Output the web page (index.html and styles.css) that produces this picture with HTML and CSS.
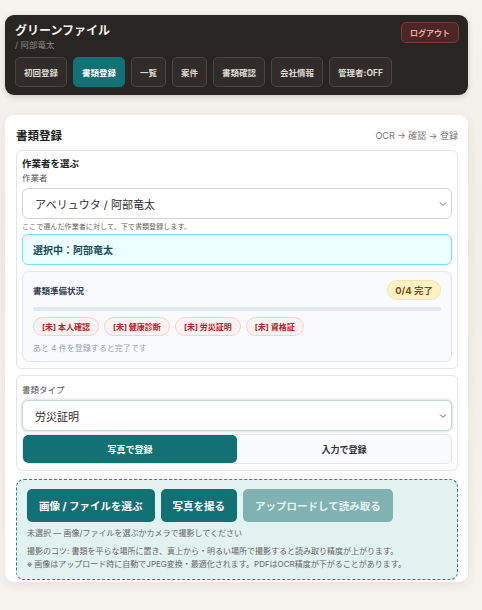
FILE: index.html
```html
<!DOCTYPE html>
<html lang="ja">
<head>
  <meta charset="UTF-8">
  <title>グリーンファイル</title>
  <link rel="stylesheet" href="styles.css">
</head>
<body>

  <header class="topbar">
    <div class="topbar-head">
      <div>
        <div class="brand">グリーンファイル</div>
        <div class="brand-user">/ 阿部竜太</div>
      </div>
      <button class="logout">ログアウト</button>
    </div>
    <nav class="nav">
      <button class="nav-btn">初回登録</button>
      <button class="nav-btn active">書類登録</button>
      <button class="nav-btn">一覧</button>
      <button class="nav-btn">案件</button>
      <button class="nav-btn">書類確認</button>
      <button class="nav-btn">会社情報</button>
      <button class="nav-btn">管理者:OFF</button>
    </nav>
  </header>

  <main class="card">
    <div class="card-head">
      <h1>書類登録</h1>
      <span class="steps">OCR → 確認 → 登録</span>
    </div>

    <section class="box">
      <div class="box-title">作業者を選ぶ</div>
      <label class="field-label">作業者</label>
      <div class="select">
        <span>アベリュウタ / 阿部竜太</span>
        <svg class="chev" width="8" height="6" viewBox="0 0 8 6"><path d="M1 1.5 L4 4.5 L7 1.5" fill="none" stroke="#666" stroke-width="1"/></svg>
      </div>
      <div class="hint">ここで選んだ作業者に対して、下で書類登録します。</div>

      <div class="selected">選択中：阿部竜太</div>

      <div class="status">
        <div class="status-head">
          <span class="status-title">書類準備状況</span>
          <span class="badge">0/4 完了</span>
        </div>
        <div class="bar"><div class="bar-fill" style="width:0%"></div></div>
        <div class="chips">
          <span class="chip">[未] 本人確認</span>
          <span class="chip">[未] 健康診断</span>
          <span class="chip">[未] 労災証明</span>
          <span class="chip">[未] 資格証</span>
        </div>
        <div class="remain">あと 4 件を登録すると完了です</div>
      </div>
    </section>

    <section class="box">
      <label class="field-label">書類タイプ</label>
      <div class="select focus">
        <span>労災証明</span>
        <svg class="chev" width="8" height="6" viewBox="0 0 8 6"><path d="M1 1.5 L4 4.5 L7 1.5" fill="none" stroke="#666" stroke-width="1"/></svg>
      </div>
      <div class="toggle">
        <button class="toggle-btn on">写真で登録</button>
        <button class="toggle-btn">入力で登録</button>
      </div>
    </section>

    <section class="upload">
      <div class="upload-actions">
        <button class="btn">画像 / ファイルを選ぶ</button>
        <button class="btn">写真を撮る</button>
        <button class="btn disabled">アップロードして読み取る</button>
      </div>
      <div class="upload-status">未選択 — 画像/ファイルを選ぶかカメラで撮影してください</div>
      <div class="upload-tips">
        撮影のコツ: 書類を平らな場所に置き、真上から・明るい場所で撮影すると読み取り精度が上がります。<br>
        ※ 画像はアップロード時に自動でJPEG変換・最適化されます。PDFはOCR精度が下がることがあります。
      </div>
    </section>
  </main>

</body>
</html>
```

FILE: styles.css
```css
* {
  box-sizing: border-box;
}

body {
  margin: 0;
  padding: 15px 14px 30px 5px;
  font-family: "Inter", "Noto Sans CJK JP", sans-serif;
  background: linear-gradient(#f6f3ee, #f1efea 40%, #f7f3ee);
  color: #1f2328;
  min-height: 610px;
}

button {
  font-family: inherit;
  cursor: pointer;
}

/* header */
.topbar {
  background: #292523;
  border-radius: 9px;
  padding: 7px 9px 8px 10px;
  box-shadow: 0 2px 6px rgba(0, 0, 0, 0.15);
}

.topbar-head {
  display: flex;
  justify-content: space-between;
  align-items: flex-start;
}

.brand {
  color: #f4f1ec;
  font-size: 12px;
  font-weight: 700;
  line-height: 16px;
  margin-top: 1px;
}

.brand-user {
  color: #8f8985;
  font-size: 8.5px;
  line-height: 12px;
}

.logout {
  margin-top: 0;
  padding: 0 8px;
  height: 21px;
  background: #4a2626;
  border: 1px solid #7c3b3b;
  border-radius: 5px;
  color: #f0a9a6;
  font-size: 8px;
  font-weight: 700;
}

.nav {
  display: flex;
  gap: 6px;
  margin-top: 6px;
}

.nav-btn {
  height: 30px;
  padding: 0 8px;
  background: #312c2a;
  border: 1px solid #4a4542;
  border-radius: 5px;
  color: #ddd8d3;
  font-size: 8.5px;
  font-weight: 700;
}

.nav-btn.active {
  background: #127174;
  border-color: #127174;
  color: #ffffff;
}

/* card */
.card {
  margin-top: 20px;
  background: #ffffff;
  border-radius: 9px;
  padding: 9px 10px 2px 11px;
  box-shadow: 0 4px 12px rgba(60, 40, 20, 0.08);
}

.card-head {
  display: flex;
  justify-content: space-between;
  align-items: center;
  height: 22px;
  margin-bottom: 4px;
}

h1 {
  margin: 0;
  font-size: 11.5px;
  font-weight: 700;
  color: #1c1c1c;
}

.steps {
  font-size: 9px;
  color: #777;
}

.box {
  border: 1px solid #e7e5e1;
  border-radius: 6px;
  padding: 6px 5px 6px 5px;
  margin-bottom: 6px;
}

.box-title {
  font-size: 9.5px;
  font-weight: 700;
  line-height: 13px;
  color: #222;
}

.field-label {
  display: block;
  font-size: 8.5px;
  color: #555;
  line-height: 13px;
  margin: 2px 0 3px;
}

.select {
  display: flex;
  justify-content: space-between;
  align-items: center;
  height: 31px;
  border: 1px solid #d8d4cd;
  border-radius: 6px;
  padding: 0 4px 0 12px;
  font-size: 11px;
  color: #2f2f2f;
  background: #fff;
}

.select.focus {
  border-color: #c5d8d6;
  box-shadow: 0 0 0 1.5px #e3eeed;
}

.hint {
  font-size: 7.1px;
  color: #666;
  line-height: 13px;
  margin-top: 1px;
}

.selected {
  margin-top: 1px;
  height: 31px;
  display: flex;
  align-items: center;
  padding-left: 10px;
  background: #ecfeff;
  border: 1.5px solid #6fe3f5;
  border-radius: 6px;
  font-size: 10px;
  font-weight: 700;
  color: #174d5b;
}

.status {
  margin-top: 6px;
  background: #f8fafc;
  border: 1px solid #e1e7ef;
  border-radius: 7px;
  padding: 8px 10px 7px 10px;
}

.status-head {
  display: flex;
  justify-content: space-between;
  align-items: center;
}

.status-title {
  font-size: 8.5px;
  font-weight: 700;
  color: #333d4c;
}

.badge {
  background: #fef3c7;
  border: 1px solid #fbe3a0;
  border-radius: 10px;
  padding: 2px 7px;
  font-size: 9.5px;
  font-weight: 700;
  color: #8a4a12;
}

.bar {
  margin-top: 7px;
  height: 4px;
  border-radius: 2px;
  background: #e2e8f0;
}

.bar-fill {
  height: 100%;
  background: #127174;
}

.chips {
  display: flex;
  gap: 5px;
  margin-top: 6px;
}

.chip {
  height: 19px;
  display: flex;
  align-items: center;
  background: #fef2f2;
  border: 1px solid #fbd0d0;
  border-radius: 10px;
  padding: 0 8px;
  font-size: 8px;
  font-weight: 700;
  color: #b3262a;
}

.remain {
  margin-top: 6px;
  font-size: 8px;
  color: #98a2b3;
  line-height: 12px;
}

.toggle {
  display: flex;
  margin-top: 3px;
  border: 1px solid #e2e6ea;
  border-radius: 6px;
  background: #f8fafc;
  overflow: hidden;
}

.toggle-btn {
  flex: 1;
  height: 28px;
  border: none;
  background: transparent;
  font-size: 9px;
  font-weight: 700;
  color: #333;
}

.toggle-btn.on {
  background: #127174;
  color: #ffffff;
  border-radius: 5px;
}

/* upload */
.upload {
  background: #e1f2f0;
  border: 1.5px dashed #2b8486;
  border-radius: 8px;
  padding: 9px 9px 8px 10px;
  margin-top: 8px;
}

.upload-actions {
  display: flex;
  gap: 6px;
}

.btn {
  height: 33px;
  padding: 0 12px;
  background: #127174;
  border: none;
  border-radius: 5px;
  color: #ffffff;
  font-size: 10.5px;
  font-weight: 700;
}

.btn.disabled {
  background: #80b2b2;
  color: #e6f2f1;
}

.upload-status {
  margin-top: 5px;
  font-size: 8px;
  color: #666;
  line-height: 12px;
}

.upload-tips {
  margin-top: 6px;
  font-size: 8px;
  color: #666;
  line-height: 13px;
}
```
